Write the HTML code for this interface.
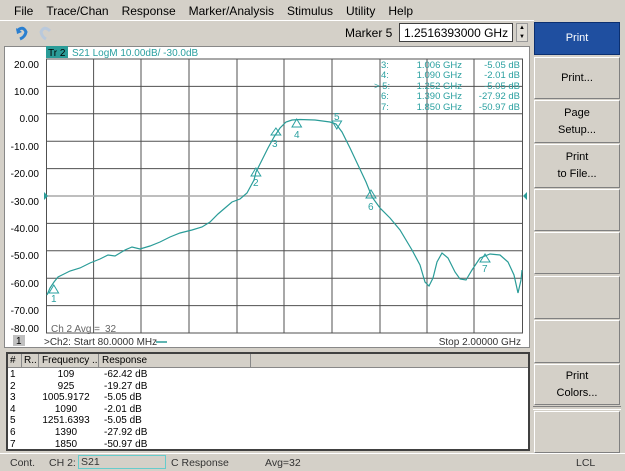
<!DOCTYPE html>
<html><head><meta charset="utf-8"><style>
body{margin:0;width:625px;height:470px;background:#d4d0c8;font-family:"Liberation Sans",sans-serif;position:relative;overflow:hidden;font-size:11px}
.a{position:absolute}
.menu span{margin-right:13px}
.btn{position:absolute;left:534px;width:86px;background:#d4d0c8;border:1px solid #fff;border-right-color:#808080;border-bottom-color:#808080;box-sizing:border-box;text-align:center;font-size:11px;display:flex;align-items:center;justify-content:center;line-height:17px}
.r{position:absolute;left:10px;font-size:10px;height:12px;line-height:12px;width:200px}
.r b{font-weight:normal;position:absolute}
.r .n{left:0}.r .f{left:20px;width:72px;text-align:center}.r .v{left:94px}
</style></head><body>
<div class="a menu" style="left:14px;top:4px;font-size:12px"><span>File</span><span>Trace/Chan</span><span>Response</span><span>Marker/Analysis</span><span>Stimulus</span><span>Utility</span><span>Help</span></div>
<div class="a" style="left:0;top:20px;width:534px;height:1px;background:#fff"></div>
<svg class="a" style="left:14px;top:25px" width="40" height="16"><path d="M3 6 Q9 0 12 7 Q11 12 6 14" stroke="#2a7fd0" stroke-width="3" fill="none"/><path d="M2 3 L3 9 L8 7Z" fill="#2a7fd0"/><path d="M36 6 Q30 0 27 7 Q28 12 32 14" stroke="#b9c9dc" stroke-width="3" fill="none"/></svg>
<div class="a" style="left:345px;top:26px;font-size:12px">Marker 5</div>
<div class="a" style="left:399px;top:23px;width:114px;height:19px;background:#fff;border:1px solid #404040;box-sizing:border-box;font-size:12px;padding:2px 0 0 4px">1.2516393000 GHz</div>
<div class="a" style="left:516px;top:23px;width:12px;height:19px;background:#e0ddd6;border:1px solid #999;box-sizing:border-box;font-size:6px;text-align:center;line-height:9px">▲<br>▼</div>
<div class="a" style="left:4px;top:46px;width:526px;height:302px;background:#fff;border:1px solid #888;box-sizing:border-box"></div>
<svg class="a" style="left:0;top:0" width="532" height="350">
<rect x="46" y="46" width="22" height="12" fill="#2a9c98"/>
<text x="48" y="56" font-size="10" fill="#000">Tr 2</text>
<text x="72" y="56" font-size="10" fill="#2aa0a0">S21 LogM 10.00dB/ -30.0dB</text>
<g stroke="#505050" stroke-width="1">
<line x1="93.6" y1="59" x2="93.6" y2="333"/><line x1="141" y1="59" x2="141" y2="333"/><line x1="189" y1="59" x2="189" y2="333"/><line x1="237" y1="59" x2="237" y2="333"/><line x1="284" y1="59" x2="284" y2="333"/><line x1="332" y1="59" x2="332" y2="333"/><line x1="380" y1="59" x2="380" y2="333"/><line x1="427" y1="59" x2="427" y2="333"/><line x1="474" y1="59" x2="474" y2="333"/>
<line x1="46" y1="86.4" x2="522" y2="86.4"/><line x1="46" y1="113.8" x2="522" y2="113.8"/><line x1="46" y1="141.2" x2="522" y2="141.2"/><line x1="46" y1="168.6" x2="522" y2="168.6"/><line x1="46" y1="223.4" x2="522" y2="223.4"/><line x1="46" y1="250.8" x2="522" y2="250.8"/><line x1="46" y1="278.2" x2="522" y2="278.2"/><line x1="46" y1="305.6" x2="522" y2="305.6"/>
<rect x="46.5" y="59" width="476" height="274" fill="none"/>
</g>
<line x1="46" y1="196" x2="522" y2="196" stroke="#a8a8a8" stroke-width="1.5"/>
<path d="M44 192 L48 196 L44 200Z" fill="#2a9c98"/><path d="M527 192 L523 196 L527 200Z" fill="#2a9c98"/>
<g font-size="10" fill="#000" text-anchor="end">
<text x="39" y="68">20.00</text><text x="39" y="95">10.00</text><text x="39" y="122">0.00</text><text x="39" y="150">-10.00</text><text x="39" y="177">-20.00</text><text x="39" y="205">-30.00</text><text x="39" y="232">-40.00</text><text x="39" y="259">-50.00</text><text x="39" y="287">-60.00</text><text x="39" y="314">-70.00</text><text x="39" y="332">-80.00</text></g>
<g font-size="9.5" fill="#2aa0a0">
<text x="381" y="68">3:</text><text x="381" y="78">4:</text><text x="374" y="89">&gt; 5:</text><text x="381" y="99">6:</text><text x="381" y="110">7:</text>
<g text-anchor="end"><text x="462" y="68">1.006 GHz</text><text x="462" y="78">1.090 GHz</text><text x="462" y="89">1.252 GHz</text><text x="462" y="99">1.390 GHz</text><text x="462" y="110">1.850 GHz</text>
<text x="520" y="68">-5.05 dB</text><text x="520" y="78">-2.01 dB</text><text x="520" y="89">-5.05 dB</text><text x="520" y="99">-27.92 dB</text><text x="520" y="110">-50.97 dB</text></g></g>
<path d="M47 295 L50 288 L54 282 L58 277 L62 275 L70 271 L80 268 L90 263 L100 259 L108 255 L115 256 L125 250 L132 247 L140 249 L150 246 L160 242 L170 237 L180 233 L192 230 L202 227 L210 222 L218 214 L225 208 L232 202 L240 199 L247 193 L254 180 L256 172 L262 160 L268 148 L274 137 L280 128 L286 122 L292 120 L300 119.5 L315 120 L330 122 L336 124 L342 132 L350 148 L358 165 L366 182 L372 197 L380 208 L390 218 L400 230 L412 250 L420 265 L425 282 L429 286 L433 278 L437 262 L442 253 L448 258 L455 272 L460 279 L466 280 L472 270 L480 258 L490 254 L500 255 L508 262 L514 275 L518 293 L521 280 L522 270" fill="none" stroke="#2a9c98" stroke-width="1.2"/>
<g fill="none" stroke="#2aa0a0" stroke-width="1">
<path d="M53.8 285 L49 293 L58.6 293Z"/><path d="M255.9 168 L251 176 L260.8 176Z"/><path d="M275.9 128 L271 135 L280.8 135Z"/><path d="M296.7 119 L292 127 L301.5 127Z"/><path d="M336.8 129 L332 121 L341.6 121Z"/><path d="M371 190 L366 198 L376 198Z"/><path d="M485 254 L480 262 L490 262Z"/></g>
<g font-size="10" fill="#2aa0a0"><text x="51" y="302">1</text><text x="253" y="186">2</text><text x="272" y="147">3</text><text x="294" y="138">4</text><text x="334" y="120">5</text><text x="368" y="210">6</text><text x="482" y="272">7</text></g>
<text x="51" y="332" font-size="10" fill="#666">Ch 2 Avg =</text><text x="105" y="332" font-size="10" fill="#666">32</text>
<rect x="13" y="335" width="12" height="11" fill="#c0c0c0"/><text x="16" y="344" font-size="10">1</text>
<text x="44" y="345" font-size="10" fill="#333">&gt;Ch2:  Start  80.0000 MHz</text><line x1="156" y1="342" x2="167" y2="342" stroke="#2a9c98" stroke-width="1.5"/>
<text x="521" y="345" font-size="10" fill="#333" text-anchor="end">Stop  2.00000 GHz</text>
</svg>
<div class="a" style="left:6px;top:352px;width:524px;height:99px;background:#fff;border:2px solid #404040;box-sizing:border-box"></div>
<div class="a" style="left:8px;top:354px;width:520px;height:13px;background:#d4d0c8;border-bottom:1px solid #888;font-size:10px">
<span class="a" style="left:2px;top:1px">#</span><span class="a" style="left:13px;top:0;height:13px;border-left:1px solid #888"></span><span class="a" style="left:16px;top:1px">R..</span><span class="a" style="left:30px;top:0;height:13px;border-left:1px solid #888"></span><span class="a" style="left:34px;top:1px">Frequency ..</span><span class="a" style="left:90px;top:0;height:13px;border-left:1px solid #888"></span><span class="a" style="left:94px;top:1px">Response</span><span class="a" style="left:242px;top:0;height:13px;border-left:1px solid #888"></span></div>
<div class="r" style="top:369px"><b class="n">1</b><b class="f">109</b><b class="v">-62.42 dB</b></div>
<div class="r" style="top:381px"><b class="n">2</b><b class="f">925</b><b class="v">-19.27 dB</b></div>
<div class="r" style="top:392px"><b class="n">3</b><b class="f">1005.9172</b><b class="v">-5.05 dB</b></div>
<div class="r" style="top:404px"><b class="n">4</b><b class="f">1090</b><b class="v">-2.01 dB</b></div>
<div class="r" style="top:415px"><b class="n">5</b><b class="f">1251.6393</b><b class="v">-5.05 dB</b></div>
<div class="r" style="top:427px"><b class="n">6</b><b class="f">1390</b><b class="v">-27.92 dB</b></div>
<div class="r" style="top:439px"><b class="n">7</b><b class="f">1850</b><b class="v">-50.97 dB</b></div>
<div class="btn" style="top:22px;height:33px;background:#1f4fa0;color:#fff;border-color:#0b2f70">Print</div>
<div class="btn" style="top:57px;height:42px">Print...</div>
<div class="btn" style="top:100px;height:43px">Page<br>Setup...</div>
<div class="btn" style="top:144px;height:44px">Print<br>to File...</div>
<div class="btn" style="top:189px;height:42px"></div>
<div class="btn" style="top:232px;height:42px"></div>
<div class="btn" style="top:276px;height:43px"></div>
<div class="btn" style="top:320px;height:43px"></div>
<div class="btn" style="top:364px;height:41px">Print<br>Colors...</div>
<div class="a" style="left:533px;top:406px;width:88px;height:2px;border-top:1px solid #808080;border-bottom:1px solid #fff"></div>
<div class="btn" style="top:411px;height:42px"></div>
<div class="a" style="left:0;top:453px;width:625px;height:17px;border-top:1px solid #fff;font-size:10.5px;color:#333">
<span class="a" style="left:10px;top:3px">Cont.</span><span class="a" style="left:49px;top:3px">CH 2:</span>
<span class="a" style="left:78px;top:1px;width:88px;height:14px;border:1px solid #6cc;box-sizing:border-box;padding-left:2px;line-height:12px">S21</span>
<span class="a" style="left:171px;top:3px">C  Response</span><span class="a" style="left:265px;top:3px">Avg=32</span><span class="a" style="left:576px;top:3px">LCL</span></div>
</body></html>
